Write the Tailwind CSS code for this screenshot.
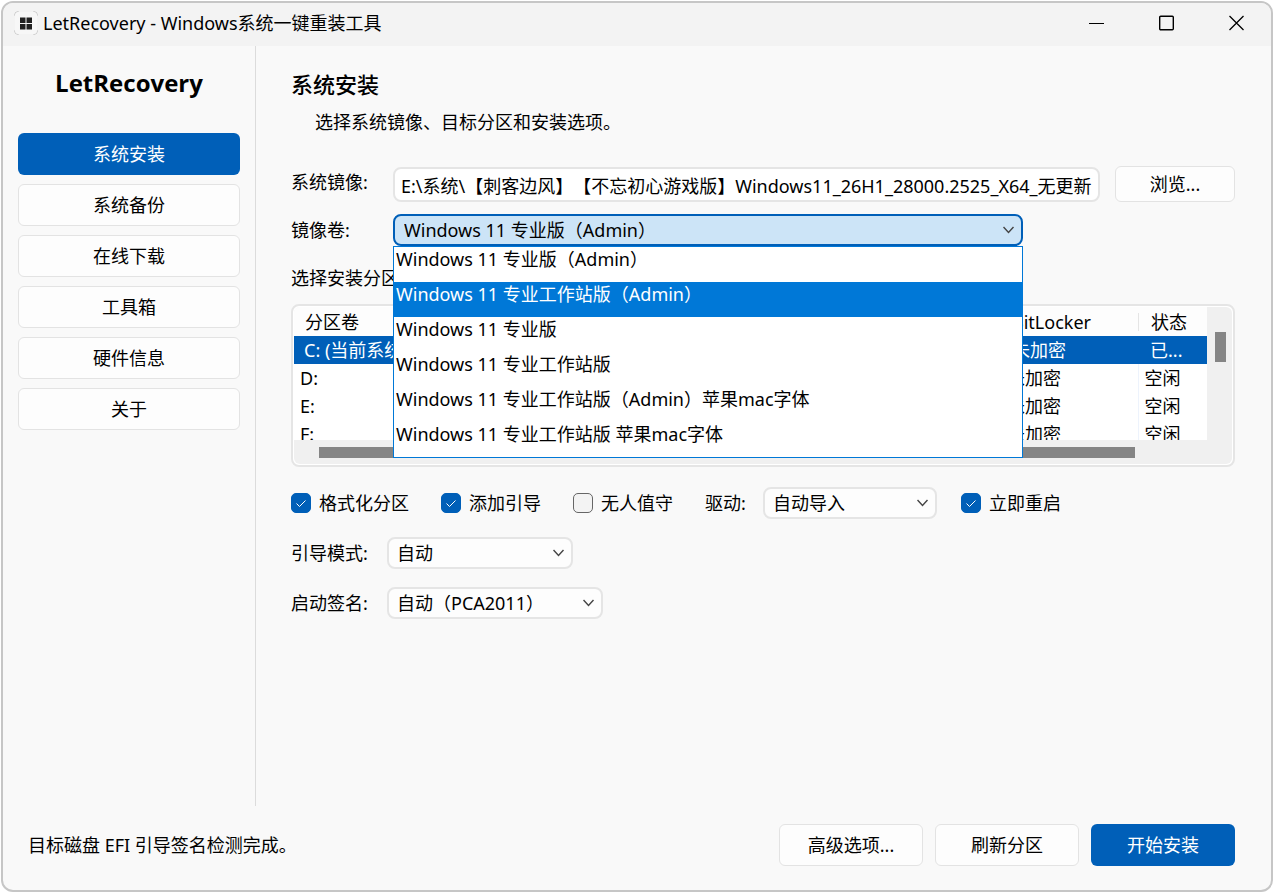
<!DOCTYPE html>
<html lang="zh-CN">
<head>
  <meta charset="UTF-8" />
  <meta name="viewport" content="width=device-width, initial-scale=1.0"/>
  <title>LetRecovery - Windows系统一键重装工具</title>
  <script src="https://cdn.jsdelivr.net/npm/@tailwindcss/browser@4"></script>
</head>
<body class="bg-white min-h-screen flex flex-col p-px pb-0.5 font-['Noto_Sans','Noto_Sans_CJK_SC',sans-serif] text-lg leading-6 text-black">
  <div class="flex-1 flex flex-col bg-[#f9f9f9] border-2 border-[#c6c6c6] rounded-xl overflow-hidden">

    <!-- Title bar -->
    <header class="h-[43px] shrink-0 bg-[#f3f3f3] flex items-center pb-[3px] pl-[11px] pr-[26px]">
      <svg class="w-6 h-6 mr-[5px]" viewBox="0 0 24 24" fill="none">
        <path d="M.5 4.5a4 4 0 0 1 4-4M19.500 .5a4 4 0 0 1 4 4M23.500 19.500a4 4 0 0 1-4 4M4.500 23.500a4 4 0 0 1-4-4" stroke="#c4c4c4"/>
        <path d="M1 4.500A3.500 3.500 0 0 1 4.500 1h15A3.500 3.500 0 0 1 23 4.500v15a3.500 3.500 0 0 1-3.500 3.500h-15A3.500 3.500 0 0 1 1 19.500z" fill="#f7f7f7"/>
        <path d="M6 6.500h5.500V12H6zM12.500 6.500H18V12h-5.500zM6 13h5.500v5.500H6zM12.500 13H18v5.500h-5.500z" fill="#222"/>
      </svg>
      <h1 class="flex-1">LetRecovery - Windows系统一键重装工具</h1>
      <div class="flex items-center gap-[54px]">
        <button aria-label="最小化"><svg class="w-4 h-4" viewBox="0 0 16 16"><path d="M0 8.500h15" stroke="#000"/></svg></button>
        <button aria-label="最大化"><svg class="w-4 h-4" viewBox="0 0 16 16"><rect x=".7" y="1.200" width="13.600" height="13.600" rx="1" fill="none" stroke="#000" stroke-width="1.400"/></svg></button>
        <button aria-label="关闭"><svg class="w-4 h-4" viewBox="0 0 16 16"><path d="M.5 1l14 14M14.500 1L.5 15" stroke="#000" stroke-width="1.300"/></svg></button>
      </div>
    </header>

    <div class="flex-1 flex">
      <!-- Sidebar -->
      <nav class="w-[253px] shrink-0 border-r border-[#dcdcdc] pt-[21px] px-[15px]">
        <h2 class="font-['Open_Sans',sans-serif] text-2xl leading-8 font-bold text-center mb-[34px]">LetRecovery</h2>
        <div class="flex flex-col gap-[9px]">
          <button class="h-[42px] rounded-md bg-[#005fb8] text-white">系统安装</button>
          <button class="h-[42px] rounded-md bg-[#fdfdfd] border border-[#e3e3e3]">系统备份</button>
          <button class="h-[42px] rounded-md bg-[#fdfdfd] border border-[#e3e3e3]">在线下载</button>
          <button class="h-[42px] rounded-md bg-[#fdfdfd] border border-[#e3e3e3]">工具箱</button>
          <button class="h-[42px] rounded-md bg-[#fdfdfd] border border-[#e3e3e3]">硬件信息</button>
          <button class="h-[42px] rounded-md bg-[#fdfdfd] border border-[#e3e3e3]">关于</button>
        </div>
      </nav>

      <!-- Install page -->
      <main class="flex-1 min-w-0 pt-6 pl-[35px] pr-9">
        <h2 class="text-[22px] leading-7 font-medium">系统安装</h2>
        <p class="mt-3 pl-6">选择系统镜像、目标分区和安装选项。</p>

        <div class="mt-8 flex items-start">
          <label for="image" class="w-[102px] leading-8">系统镜像:</label>
          <input id="image" type="text" value="E:\系统\【刺客边风】【不忘初心游戏版】Windows11_26H1_28000.2525_X64_无更新" class="flex-1 min-w-0 h-[35px] self-end pl-1.5 bg-white border-2 border-[#e5e5e5] rounded-lg [text-spacing-trim:space-all]" />
          <button class="ml-[15px] w-[120px] h-9 rounded-md bg-[#fdfdfd] border border-[#e3e3e3]">浏览...</button>
        </div>

        <div class="mt-3 flex items-center">
          <label for="volume" class="w-[102px]">镜像卷:</label>
          <div class="relative flex-1 mr-[212px]">
            <select id="volume" class="block w-full h-8 appearance-none pl-[9px] pr-8 bg-[#cce4f7] border-2 border-[#005fb8] rounded-lg">
              <option>Windows 11 专业版（Admin）</option>
            </select>
            <svg class="absolute right-2 top-2.5 w-3 h-3 pointer-events-none" viewBox="0 0 12 12"><path d="M.5 3l5 5.500 5-5.500" fill="none" stroke="#444" stroke-width="1.400"/></svg>
            <!-- Open list of volumes -->
            <ul role="listbox" aria-label="镜像卷" class="absolute z-10 left-0 right-0 top-full bg-white border border-[#0078d7]">
              <li role="option" class="h-[35px] pl-0.5">Windows 11 专业版（Admin）</li>
              <li role="option" aria-selected="true" class="h-[35px] pl-0.5 bg-[#0078d7] text-white">Windows 11 专业工作站版（Admin）</li>
              <li role="option" class="h-[35px] pl-0.5">Windows 11 专业版</li>
              <li role="option" class="h-[35px] pl-0.5">Windows 11 专业工作站版</li>
              <li role="option" class="h-[35px] pl-0.5">Windows 11 专业工作站版（Admin）苹果mac字体</li>
              <li role="option" class="h-[35px] pl-0.5">Windows 11 专业工作站版 苹果mac字体</li>
            </ul>
          </div>
        </div>

        <p class="mt-5">选择安装分区:</p>

        <div class="mt-[14px] border-2 border-[#e5e5e5] rounded-lg bg-white p-px">
          <div class="rounded-md overflow-hidden bg-[#f0f0f0]">
            <div class="flex">
              <div class="flex-1 h-[133px] overflow-hidden bg-white">
                <table class="w-full table-fixed text-left">
                  <thead>
                    <tr class="h-[29px] bg-[#fdfdfd]">
                      <th class="font-normal pl-[11px]">分区卷</th>
                      <th class="w-[138px] font-normal pl-3">BitLocker</th>
                      <th class="w-[69px] font-normal"><div class="h-[18px] leading-[18px] border-l border-[#e5e5e5] pl-3">状态</div></th>
                    </tr>
                  </thead>
                  <tbody>
                    <tr class="h-7 bg-[#005fb8] text-white">
                      <td class="pl-2.5">C: (当前系统)</td>
                      <td class="pl-3">未加密</td>
                      <td class="pl-3">已...</td>
                    </tr>
                    <tr class="h-7">
                      <td class="pl-1.5">D:</td>
                      <td class="pl-[7px]">未加密</td>
                      <td class="pl-1.5 border-l border-[#edf3fc]">空闲</td>
                    </tr>
                    <tr class="h-7">
                      <td class="pl-1.5">E:</td>
                      <td class="pl-[7px]">未加密</td>
                      <td class="pl-1.5 border-l border-[#edf3fc]">空闲</td>
                    </tr>
                    <tr class="h-7">
                      <td class="pl-1.5">F:</td>
                      <td class="pl-[7px]">未加密</td>
                      <td class="pl-1.5 border-l border-[#edf3fc]">空闲</td>
                    </tr>
                  </tbody>
                </table>
              </div>
              <div class="w-[25px] pl-2 pt-[25px]">
                <div class="w-[11px] h-[30px] bg-[#858585]"></div>
              </div>
            </div>
            <div class="h-6 pt-[7px] pl-[25px] pr-[97px]">
              <div class="h-[11px] bg-[#858585]"></div>
            </div>
          </div>
        </div>

        <div class="mt-5 flex flex-col gap-[18px]">
          <div class="flex items-center h-8">
            <label class="flex items-center gap-2 mr-8">
              <span class="grid">
                <input type="checkbox" checked class="col-start-1 row-start-1 appearance-none w-5 h-5 rounded-[5px] border border-[#666] bg-[#f3f3f3] checked:bg-[#005fb8] checked:border-[#005fb8]" />
                <svg class="col-start-1 row-start-1 w-5 h-5 pointer-events-none" viewBox="0 0 20 20"><path d="M5.500 10.500l3 3 6-6" fill="none" stroke="#fff"/></svg>
              </span>
              格式化分区
            </label>
            <label class="flex items-center gap-2 mr-8">
              <span class="grid">
                <input type="checkbox" checked class="col-start-1 row-start-1 appearance-none w-5 h-5 rounded-[5px] border border-[#666] bg-[#f3f3f3] checked:bg-[#005fb8] checked:border-[#005fb8]" />
                <svg class="col-start-1 row-start-1 w-5 h-5 pointer-events-none" viewBox="0 0 20 20"><path d="M5.500 10.500l3 3 6-6" fill="none" stroke="#fff"/></svg>
              </span>
              添加引导
            </label>
            <label class="flex items-center gap-2 mr-8">
              <input type="checkbox" class="appearance-none w-5 h-5 rounded-[5px] border border-[#666] bg-[#f3f3f3] checked:bg-[#005fb8]" />
              无人值守
            </label>
            <label for="driver" class="w-[58px]">驱动:</label>
            <div class="relative w-[174px] mr-6">
              <select id="driver" class="block w-full h-8 appearance-none pl-2 pr-7 bg-[#fdfdfd] border-2 border-[#e5e5e5] rounded-lg">
                <option>自动导入</option>
              </select>
              <svg class="absolute right-2 top-2.5 w-3 h-3 pointer-events-none" viewBox="0 0 12 12"><path d="M.5 3l5 5.500 5-5.500" fill="none" stroke="#444" stroke-width="1.400"/></svg>
            </div>
            <label class="flex items-center gap-2">
              <span class="grid">
                <input type="checkbox" checked class="col-start-1 row-start-1 appearance-none w-5 h-5 rounded-[5px] border border-[#666] bg-[#f3f3f3] checked:bg-[#005fb8] checked:border-[#005fb8]" />
                <svg class="col-start-1 row-start-1 w-5 h-5 pointer-events-none" viewBox="0 0 20 20"><path d="M5.500 10.500l3 3 6-6" fill="none" stroke="#fff"/></svg>
              </span>
              立即重启
            </label>
          </div>

          <div class="flex items-center">
            <label for="bootMode" class="w-24">引导模式:</label>
            <div class="relative w-[186px]">
              <select id="bootMode" class="block w-full h-8 appearance-none pl-2 pr-7 bg-[#fdfdfd] border-2 border-[#e5e5e5] rounded-lg">
                <option>自动</option>
              </select>
              <svg class="absolute right-2 top-2.5 w-3 h-3 pointer-events-none" viewBox="0 0 12 12"><path d="M.5 3l5 5.500 5-5.500" fill="none" stroke="#444" stroke-width="1.400"/></svg>
            </div>
          </div>

          <div class="flex items-center">
            <label for="bootSign" class="w-24">启动签名:</label>
            <div class="relative w-[216px]">
              <select id="bootSign" class="block w-full h-8 appearance-none pl-2 pr-7 bg-[#fdfdfd] border-2 border-[#e5e5e5] rounded-lg">
                <option>自动（PCA2011）</option>
              </select>
              <svg class="absolute right-2 top-2.5 w-3 h-3 pointer-events-none" viewBox="0 0 12 12"><path d="M.5 3l5 5.500 5-5.500" fill="none" stroke="#444" stroke-width="1.400"/></svg>
            </div>
          </div>
        </div>
      </main>
    </div>

    <!-- Status and actions -->
    <footer class="flex items-center gap-3 pt-[18px] pb-6 pl-[25px] pr-9">
      <p class="flex-1">目标磁盘 EFI 引导签名检测完成。</p>
      <button class="w-36 h-[42px] rounded-md bg-[#fdfdfd] border border-[#e3e3e3]">高级选项...</button>
      <button class="w-36 h-[42px] rounded-md bg-[#fdfdfd] border border-[#e3e3e3]">刷新分区</button>
      <button class="w-36 h-[42px] rounded-md bg-[#005fb8] text-white">开始安装</button>
    </footer>
  </div>
</body>
</html>
